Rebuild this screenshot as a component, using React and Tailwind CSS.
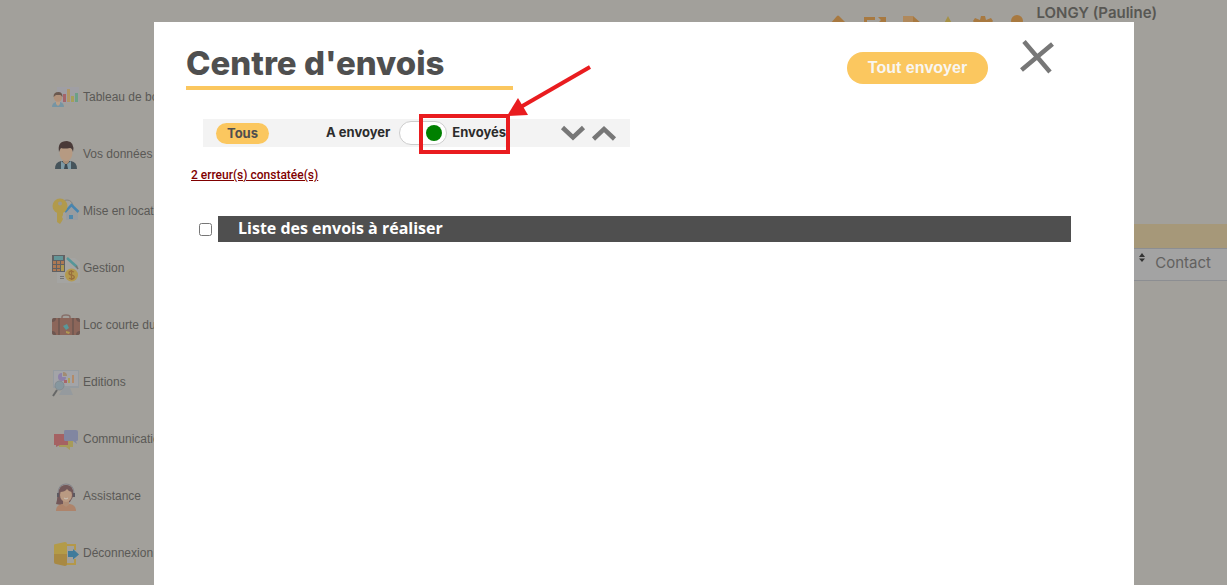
import React from "react";

function DashboardIcon() {
  return (
    <svg viewBox="0 0 28 28" className="size-7 shrink-0 opacity-90" aria-hidden="true">
      <path d="M5 3h22v16H5z" fill="#a09fa5" />
      <path d="M11 10h3v8h-3z" fill="#a65f65" />
      <path d="M15 5h3v13h-3z" fill="#b29660" />
      <path d="M19 12h3v6h-3z" fill="#a7a052" />
      <path d="M23 9h3v9h-3z" fill="#68a184" />
      <path d="M0 23q0-4 4-5h4q4 1 4 5z" fill="#7294a5" />
      <path d="M4 16h4v4l-2 2-2-2z" fill="#bca088" />
      <circle cx="6" cy="13.500" r="4.200" fill="#b39178" />
      <path d="M1.500 13q0-5 5-5 4 0 4 5l-2-2H4z" fill="#665247" />
    </svg>
  );
}

function UserIcon() {
  return (
    <svg viewBox="0 0 28 28" className="size-7 shrink-0 opacity-90" aria-hidden="true">
      <path d="M3 28q0-7 6-8h10q6 1 6 8z" fill="#3d4c55" />
      <path d="M9 20l5 4 5-4v8H9z" fill="#7b9aa8" />
      <path d="M11 17h6v4l-3 3-3-3z" fill="#aa8b73" />
      <path d="M13 23h2l1 5h-4z" fill="#33404a" />
      <ellipse cx="14" cy="12" rx="6.500" ry="8" fill="#b99a80" />
      <path d="M7 11Q5 0 15 0q8 1 6 11-1-4-3-4-6 1-9 0-1 1-2 4z" fill="#40302e" />
    </svg>
  );
}

function KeyHouseIcon() {
  return (
    <svg viewBox="0 0 28 28" className="size-7 shrink-0 opacity-90" aria-hidden="true">
      <circle cx="15" cy="8" r="6" fill="none" stroke="#85837f" />
      <path d="M14 14l6-6 6 6v8H14z" fill="#999ca0" />
      <path d="M17 17h4v4h-4z" fill="#4786ad" />
      <path d="M13 14L19.500 7l7 7" fill="none" stroke="#3f83b2" strokeWidth="2.500" />
      <circle cx="8" cy="8" r="7.500" fill="#b39a44" />
      <path d="M5 13h6v4l-1 2 1 2-1 2-2 3-3-2z" fill="#b39a44" />
      <circle cx="8" cy="5.500" r="2" fill="#999892" />
    </svg>
  );
}

function CalculatorIcon() {
  return (
    <svg viewBox="0 0 28 28" className="size-7 shrink-0 opacity-90" aria-hidden="true">
      <path d="M5 3h18l5 4v21H5z" fill="#a5a5a3" />
      <path d="M0 0h13v17H0z" fill="#5a5b5e" />
      <path d="M2 1h9v4H2z" fill="#5d9497" />
      <path d="M1 6h3v3H1zm4 0h3v3H5zM1 10h3v3H1zm4 0h3v3H5zM1 14h3v2H1zm4 0h3v2H5zm4-8h3v3H9z" fill="#b0754c" />
      <path d="M9 10h3v6H9z" fill="#b19a49" />
      <path d="M15 3l10 9" stroke="#4d9699" strokeWidth="2.500" />
      <path d="M24 11l2 3" stroke="#726f6d" strokeWidth="1.500" />
      <path d="M8 21.500h4m-4 2h4" stroke="#6e6e6d" />
      <circle cx="19.500" cy="20" r="6.500" fill="#b79a46" />
      <path d="M22 17q-5-2-5 1 0 2 3 2 3 1 2 3-2 2-5 0m2.500-8v10" fill="none" stroke="#996934" strokeWidth="1.300" />
    </svg>
  );
}

function SuitcaseIcon() {
  return (
    <svg viewBox="0 0 28 28" className="size-7 shrink-0 opacity-90" aria-hidden="true">
      <path d="M10 7V5q0-2 4-2t4 2v2" fill="none" stroke="#856b65" strokeWidth="1.500" />
      <rect y="6" width="28" height="17" rx="3" fill="#8a6054" />
      <path d="M0 10q4 0 4-4H2Q0 6 0 8zm28 0q-4 0-4-4h2q2 0 2 2zM0 19q4 0 4 4H2q-2 0-2-2zm28 0q-4 0-4 4h2q2 0 2-2z" fill="#69504a" />
      <path d="M7 6v17M21 6v17" stroke="#70534b" strokeWidth="2" />
      <path d="M11 14l4-2 2 4-3 2z" fill="#52989a" />
      <path d="M14 19l4 1-1 2-3-1z" fill="#b39a4a" />
    </svg>
  );
}

function ReportIcon() {
  return (
    <svg viewBox="0 0 28 28" className="size-7 shrink-0 opacity-90" aria-hidden="true">
      <path d="M1 1h26v18H1z" fill="#949ba1" />
      <path d="M2 2h24v15H2z" fill="#a4a5aa" />
      <path d="M11 19h7l3 7H7z" fill="#949a9f" />
      <path d="M10 4a4 4 0 1 0 4 4h-4z" fill="#8b7eab" />
      <path d="M11 3a4 4 0 0 1 4 4h-4z" fill="#a3896e" />
      <path d="M12 11h3v3h-3z" fill="#aa6065" />
      <path d="M16 9h2v5h-2z" fill="#ac9f54" />
      <path d="M20 6h2v8h-2z" fill="#b58964" />
      <circle cx="7.500" cy="16.500" r="4.500" fill="#8497a0" stroke="#7f8a90" />
      <path d="M5 21l-4 6" stroke="#606162" strokeWidth="2" />
    </svg>
  );
}

function ChatIcon() {
  return (
    <svg viewBox="0 0 28 28" className="size-7 shrink-0 opacity-90" aria-hidden="true">
      <path d="M7 14h14v7h-3v3l-4-3H7z" fill="#a89b53" />
      <path d="M2 8h14v11H8l-4 2v-2H2z" fill="#a65c5d" />
      <path d="M13 4h11q2 0 2 2v8q0 1-2 1l1 3-4-3h-8q-1 0-1-2V6q0-2 1-2z" fill="#7e84a2" />
    </svg>
  );
}

function AssistantIcon() {
  return (
    <svg viewBox="0 0 28 28" className="size-7 shrink-0 opacity-90" aria-hidden="true">
      <path d="M5 17Q6 1 14 2q7-1 8 10l-4 7-9 3-5-1z" fill="#6f5152" />
      <path d="M4 28q0-6 6-7h8q6 1 6 7z" fill="#b08166" />
      <path d="M11 16h6v6l-3 2-3-2z" fill="#b18b72" />
      <ellipse cx="14" cy="12" rx="6" ry="7" fill="#bc9a80" />
      <path d="M8 9q5 0 7-3 2 3 5 3-1-5-6-5-5 0-6 5z" fill="#6f5152" />
      <path d="M6 11Q6 1 14 1t8 10" fill="none" stroke="#81818a" />
      <path d="M5 10h2v4H5zm16 0h2v4h-2z" fill="#55525b" />
      <path d="M12 15q2 2 4 0" fill="none" stroke="#d0c8bd" />
    </svg>
  );
}

function LogoutIcon() {
  return (
    <svg viewBox="0 0 28 28" className="size-7 shrink-0 opacity-90" aria-hidden="true">
      <path d="M14 5h9v5m0 9v5h-9" fill="none" stroke="#b69841" strokeWidth="2" />
      <path d="M2 5q0-1 2-1l9-2q2 0 2 2v11H2z" fill="#b59b40" />
      <path d="M2 14h13v10q0 2-2 2l-9-2q-2 0-2-2z" fill="#a9873a" />
      <path d="M16 11h5V9l6 5.500-6 5V17h-5z" fill="#36789b" />
    </svg>
  );
}

const menu = [
  ["Tableau de bord", DashboardIcon],
  ["Vos données", UserIcon],
  ["Mise en location", KeyHouseIcon],
  ["Gestion", CalculatorIcon],
  ["Loc courte durée", SuitcaseIcon],
  ["Editions", ReportIcon],
  ["Communication", ChatIcon],
  ["Assistance", AssistantIcon],
  ["Déconnexion", LogoutIcon],
];

function Sidebar() {
  return (
    <nav className="w-48 shrink-0 pt-[69px] pl-[52px] font-['Liberation_Sans',sans-serif] text-xs text-[#5a5956]">
      {menu.map(([label, Icon]) => (
        <a key={label} href="#" className="flex h-[57px] items-center gap-[3px] whitespace-nowrap">
          <Icon />
          <span className="pb-0.5">{label}</span>
        </a>
      ))}
    </nav>
  );
}

function HeaderIcons() {
  return (
    <svg viewBox="0 0 200 24" className="h-6 w-[200px]" fill="#a87940" aria-hidden="true">
      <path d="M0 12L7 4Q8 3 9 4l8 8v12H0z" />
      <path d="M34 5h11v3h-8v13h14v-6h3v9H34zM48 5h8v8l-3-3-6 6-2-2 6-6z" />
      <path d="M73 4h10v20H73z" fill="#b0895c" />
      <path d="M83 4l9 8v12h-9z" />
      <path d="M118 4l10 19h-20z" fill="#a59046" />
      <path d="M151 4h4l1 4 5-2 2 3-3 4 4 3-3 5h-16l-3-5 4-3-3-4 2-3 5 2z" />
      <circle cx="187" cy="9" r="6" />
      <path d="M177 24q0-8 10-8t10 8z" />
    </svg>
  );
}

function PageBackdrop() {
  return (
    <div className="flex min-h-screen bg-[#a2a09b]">
      <Sidebar />
      <div className="min-w-0 flex-1">
        <header className="flex items-start justify-end gap-1.5 pr-[70px]">
          <div className="pt-3">
            <HeaderIcons />
          </div>
          <p className="pt-[3px] font-['Inter','Liberation_Sans',sans-serif] text-[15px] leading-5 font-semibold text-[#585753]">
            LONGY (Pauline)
          </p>
        </header>
        <div className="mt-[188px] h-6 bg-[#a69879]" />
        <table className="w-full border-y border-[#8c8e92] bg-[#a3a3a3]">
          <thead>
            <tr className="h-8">
              <th className="py-1 pr-4 align-top font-['Inter','Liberation_Sans',sans-serif] text-[15px] leading-5 font-normal text-[#62615f]">
                <span className="flex items-start justify-end gap-[9px]">
                  <svg viewBox="0 0 8 10" className="h-2.5 w-2" fill="#343434" aria-hidden="true">
                    <path d="M1 4l3-4 3 4zm0 1.500h6L4 9z" />
                  </svg>
                  Contact
                </span>
              </th>
            </tr>
          </thead>
        </table>
      </div>
    </div>
  );
}

function Annotation() {
  return (
    <svg
      viewBox="0 0 176 92"
      className="pointer-events-none absolute -top-14 left-[216px] h-[92px] w-44"
      fill="none"
      stroke="#e91c1f"
      strokeWidth="4"
      aria-hidden="true"
    >
      <path d="M2 53h87v36H2z" />
      <path d="M171 4L100 45" />
      <path d="M88 53l11-18 10 17z" fill="#e91c1f" stroke="none" />
    </svg>
  );
}

function FilterBar() {
  return (
    <div className="relative mt-[29px] ml-[17px] flex h-7 w-[427px] items-center bg-[#f3f3f3] px-[13px] font-['Inter','Liberation_Sans',sans-serif] text-[13px] font-bold text-[#2c2c2c]">
      <button type="button" className="h-[21px] w-[53px] rounded-full bg-[#fbc75f] leading-5 text-[#4f4f4f]">
        Tous
      </button>
      <label htmlFor="sent" className="ml-auto">A envoyer</label>
      <span className="relative mr-[5px] ml-[9px] h-6 w-12 rounded-full border border-[#cdcdcd] bg-white">
        <input
          id="sent"
          type="checkbox"
          role="switch"
          defaultChecked
          aria-label="Envoyés"
          className="peer absolute inset-0 size-full cursor-pointer appearance-none rounded-full"
        />
        <span className="pointer-events-none absolute top-[3px] left-1 size-4 rounded-full bg-[#777] peer-checked:left-[26px] peer-checked:bg-[#008000]" />
      </span>
      <span>Envoyés</span>
      <div className="ml-[54px] flex gap-[5px]">
        <button type="button" aria-label="Déplier">
          <svg viewBox="0 0 26 18" className="h-[18px] w-[26px]" fill="none" stroke="#777" strokeWidth="4.500" aria-hidden="true">
            <path d="M2.500 3.500l10.500 10 10.500-10" />
          </svg>
        </button>
        <button type="button" aria-label="Replier">
          <svg viewBox="0 0 26 18" className="h-[18px] w-[26px]" fill="none" stroke="#777" strokeWidth="4.500" aria-hidden="true">
            <path d="M2.500 15L13 5l10.500 10" />
          </svg>
        </button>
      </div>
      <Annotation />
    </div>
  );
}

function SendCenter() {
  return (
    <section role="dialog" aria-labelledby="title" className="min-h-full flex-1 bg-white pl-8">
      <header className="flex items-start pt-[18px] pr-20">
        <h1
          id="title"
          className="w-[327px] border-b-4 border-[#fbc75f] pt-0.5 pb-0.5 font-['Inter','Liberation_Sans',sans-serif] text-[33px] leading-[42px] font-extrabold whitespace-nowrap text-[#4f4f4f]"
        >
          Centre d'envois
        </h1>
        <button
          type="button"
          className="mt-3 ml-auto h-8 w-[141px] rounded-full bg-[#fbc75f] font-['Liberation_Sans',sans-serif] text-base font-bold text-[#f8f6f2]"
        >
          Tout envoyer
        </button>
        <button type="button" aria-label="Fermer" className="ml-8">
          <svg viewBox="0 0 34 34" className="size-[34px]" stroke="#777" strokeWidth="4.500" aria-hidden="true">
            <path d="M4 1.500L30 32M32.500 4L1.500 30" />
          </svg>
        </button>
      </header>
      <FilterBar />
      <a
        href="#"
        className="mt-5 ml-[5px] inline-block font-['Roboto','Liberation_Sans',sans-serif] text-xs leading-4 font-medium text-[#800000] underline"
      >
        2 erreur(s) constatée(s)
      </a>
      <div className="mt-[31px] mr-[63px] ml-[13px] flex items-center gap-1.5">
        <input id="all" type="checkbox" className="size-[13px] shrink-0" />
        <label
          htmlFor="all"
          className="h-[26px] flex-1 bg-[#4f4f4f] pl-5 font-['Open_Sans','Noto_Sans',sans-serif] text-base leading-[25px] font-bold text-white"
        >
          Liste des envois à réaliser
        </label>
      </div>
    </section>
  );
}

export default function App() {
  return (
    <main className="relative h-screen overflow-hidden">
      <PageBackdrop />
      <div className="absolute inset-0 flex pt-[22px] pr-[93px] pl-[154px]">
        <SendCenter />
      </div>
    </main>
  );
}
